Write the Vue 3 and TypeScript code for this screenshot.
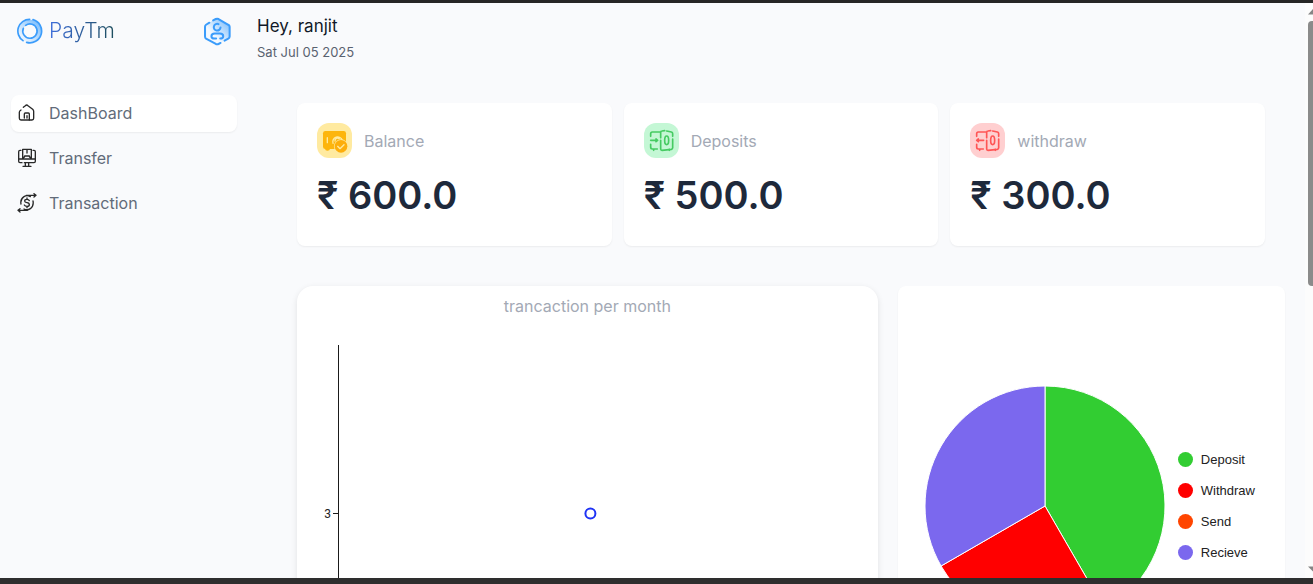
<script setup lang="ts">
import { computed } from 'vue'

interface NavItem {
  label: string
  icon: 'home' | 'transfer' | 'transaction'
  active?: boolean
}

interface Stat {
  label: string
  amount: string
  tone: 'amber' | 'green' | 'red'
}

interface Share {
  label: string
  value: number
  color: string
}

const navItems: NavItem[] = [
  { label: 'DashBoard', icon: 'home', active: true },
  { label: 'Transfer', icon: 'transfer' },
  { label: 'Transaction', icon: 'transaction' },
]

const stats: Stat[] = [
  { label: 'Balance', amount: '600.0', tone: 'amber' },
  { label: 'Deposits', amount: '500.0', tone: 'green' },
  { label: 'withdraw', amount: '300.0', tone: 'red' },
]

const shares: Share[] = [
  { label: 'Deposit', value: 500, color: '#32cd32' },
  { label: 'Withdraw', value: 300, color: '#ff0000' },
  { label: 'Send', value: 0, color: '#ff4500' },
  { label: 'Recieve', value: 400, color: '#7b68ee' },
]

const slices = computed(() => {
  const total = shares.reduce((sum, s) => sum + s.value, 0)
  const r = 120
  let angle = 0
  const point = (a: number) => `${r * Math.sin(a)} ${-r * Math.cos(a)}`
  return shares
    .filter((s) => s.value > 0)
    .map((s) => {
      const start = angle
      angle += (s.value / total) * Math.PI * 2
      const large = angle - start > Math.PI ? 1 : 0
      return {
        color: s.color,
        d: `M0 0L${point(start)}A${r} ${r} 0 ${large} 1 ${point(angle)}Z`,
      }
    })
})
</script>

<template>
  <div class="frame">
    <div class="app">
      <aside class="sidebar">
        <header class="brand-row">
          <a href="#" class="brand">
            <svg class="logo" viewBox="0 0 78 78" aria-hidden="true">
              <defs>
                <linearGradient id="ringFill" x1="0" y1="1" x2="1" y2="0">
                  <stop offset="0.2" stop-color="#e8f3fe" />
                  <stop offset="1" stop-color="#6db6fb" />
                </linearGradient>
              </defs>
              <circle cx="39" cy="39" r="34" fill="url(#ringFill)" />
              <circle cx="39" cy="39" r="21" fill="#f9fafc" />
              <g fill="none" stroke="#3b9cfb" stroke-width="5" stroke-linecap="round">
                <path d="M48 5A35 35 0 1 1 29 73M18 68A35 35 0 0 1 38 4" />
                <path d="M26 22A21.5 21.5 0 1 1 19 31" />
              </g>
            </svg>
            <span class="brand-name">PayTm</span>
          </a>
          <button class="avatar" type="button" aria-label="Profile">
            <svg viewBox="0 0 80 86" aria-hidden="true">
              <defs>
                <linearGradient id="hexFill" x1="0" y1="1" x2="1" y2="0">
                  <stop offset="0.35" stop-color="#f4f9ff" />
                  <stop offset="1" stop-color="#6db6fb" />
                </linearGradient>
              </defs>
              <path d="M39 4L76 24V62L39 82L3 62V24Z" fill="url(#hexFill)" />
              <g fill="none" stroke="#3b9cfb" stroke-width="6" stroke-linecap="round" stroke-linejoin="round">
                <path d="M16 17L6 23Q3 25 3 29V58Q3 62 6 64L35 80Q39 82 43 80L49 77M61 70L72 64Q76 62 76 58V29Q76 25 72 23L43 6Q39 4 35 6L27 10" />
                <path d="M43 21A10 10 0 1 0 49 31" />
                <path d="M36 64H31Q22 64 22 57Q22 49 32 49H47Q57 49 57 57Q57 64 48 64" />
              </g>
            </svg>
          </button>
        </header>

        <nav class="nav" aria-label="Main">
          <a v-for="item in navItems" :key="item.label" href="#" class="nav-item" :class="{ active: item.active }">
            <svg viewBox="0 0 60 60" class="nav-icon" aria-hidden="true">
              <g fill="none" stroke="#292929" stroke-width="4" stroke-linecap="round" stroke-linejoin="round">
                <template v-if="item.icon === 'home'">
                  <path d="M12 21Q7 24 7 28V46Q7 51 12 51H45Q50 51 50 46V25Q50 22 47 19L33 8Q29 4 25 8L19 13" />
                  <path d="M22 45V33Q22 30 25 30H34Q37 30 37 33V51M30 38V45" />
                </template>
                <template v-else-if="item.icon === 'transfer'">
                  <path d="M12 7H9Q5 7 5 11V40Q5 44 9 44H15M22 44H51Q55 44 55 40V11Q55 7 51 7H48" />
                  <path d="M5 33H55M17 31V4H43V31M30 6V15M17 29Q23 29 23 24H37Q37 29 43 29M25 46V54M35 46V54M18 55H42" />
                </template>
                <template v-else>
                  <path d="M40 11Q30 5 21 11Q9 19 12 33M21 48Q31 53 40 47Q51 39 48 24M28 7H56M51 2L57 7L51 12M32 52H4M9 47L3 52L9 57" />
                  <path d="M37 23Q35 19 30 19Q23 19 23 24Q23 28 30 29Q37 30 37 35Q37 40 30 40Q24 40 22 36M30 15V19M30 40V44" />
                </template>
              </g>
            </svg>
            <span>{{ item.label }}</span>
          </a>
        </nav>
      </aside>

      <main class="main">
        <header class="greeting">
          <h1>Hey, ranjit</h1>
          <p>Sat Jul 05 2025</p>
        </header>

        <section class="stats">
          <article v-for="stat in stats" :key="stat.label" class="stat">
            <div class="stat-head">
              <svg class="badge" :class="stat.tone" viewBox="0 0 105 105" aria-hidden="true">
                <template v-if="stat.tone === 'amber'">
                  <rect x="18" y="24" width="69" height="54" rx="7" fill="#fdb50d" />
                  <path d="M25 76H38V81Q31 86 25 81Z" fill="#fdb50d" />
                  <g fill="none" stroke="#ffeaa0" stroke-width="4" stroke-linecap="round">
                    <path d="M31 44V59" />
                    <path d="M48 61A14 14 0 1 1 76 52M54 54A8 8 0 0 1 67 47" />
                  </g>
                  <circle cx="72" cy="70" r="21" fill="#ffeaa0" />
                  <circle cx="72" cy="70" r="19" fill="#fdae0b" />
                  <path d="M62 70L69 77L81 65" fill="none" stroke="#ffeaa0" stroke-width="4" stroke-linecap="round" stroke-linejoin="round" />
                </template>
                <g v-else fill="none" stroke="currentColor" stroke-width="5" stroke-linecap="round" stroke-linejoin="round">
                  <path d="M20 40V32Q20 27 25 27H47M20 64V73Q20 78 25 78H40M29 78V82M76 82V79" />
                  <path d="M50 44V28Q50 24 54 24L62 23M68 24L82 27Q86 28 86 32V40M86 48V74Q86 78 82 79L54 82Q50 82 50 78V52" />
                  <ellipse cx="68" cy="52" rx="6" ry="13" />
                  <path :d="stat.tone === 'green' ? 'M20 52H41M36 48L41 52L36 56' : 'M41 52H20M25 48L20 52L25 56'" />
                </g>
              </svg>
              <h2>{{ stat.label }}</h2>
            </div>
            <p class="amount">₹ {{ stat.amount }}</p>
          </article>
        </section>

        <section class="charts">
          <figure class="card line-card">
            <figcaption>trancaction per month</figcaption>
            <svg class="line-chart" role="img" aria-label="Transactions per month">
              <path d="M35.5 0V400M30 168.5H35.5" fill="none" stroke="#1a1a1a" />
              <text x="28" y="173" text-anchor="end">3</text>
              <circle cx="50%" cy="168.5" r="5" fill="#fff" stroke="#1f33f5" stroke-width="2" />
            </svg>
          </figure>

          <figure class="card pie-card">
            <svg class="pie" viewBox="-121 -121 242 242" role="img" aria-label="Share of transactions">
              <path v-for="slice in slices" :key="slice.color" :d="slice.d" :fill="slice.color" stroke="#fff" stroke-linejoin="round" />
            </svg>
            <ul class="legend">
              <li v-for="share in shares" :key="share.label">
                <svg viewBox="0 0 15 15" aria-hidden="true"><circle cx="7.5" cy="7.5" r="7.5" :fill="share.color" /></svg>
                <span>{{ share.label }}</span>
              </li>
            </ul>
          </figure>
        </section>
      </main>

      <div class="scrollbar" aria-hidden="true">
        <svg viewBox="0 0 5 6"><path d="M0 5.5L5 0V5.5Z" fill="#858585" /></svg>
        <div class="thumb"></div>
        <svg viewBox="0 0 5 6"><path d="M0 0.5L5 5.5V0.5Z" fill="#858585" /></svg>
      </div>
    </div>
  </div>
</template>

<style>
body {
  margin: 0;
  background: #f9fafc;
}
</style>

<style scoped>
.frame {
  box-sizing: border-box;
  height: 100vh;
  border-top: 3px solid #262626;
  border-bottom: 6px solid #2e2e2e;
  overflow: hidden;
  font-family: Inter, "Noto Sans", "Liberation Sans", sans-serif;
  font-size: 16px;
  font-weight: 400;
  line-height: 24px;
  color: #111827;
}

.app {
  display: flex;
  height: 100%;
}

h1,
h2,
p,
ul,
figure {
  margin: 0;
  padding: 0;
  font-weight: inherit;
}

a {
  color: inherit;
  text-decoration: none;
}

.sidebar {
  flex: 0 0 226px;
  padding: 12px 20px 0 11px;
}

.brand-row {
  display: flex;
  align-items: center;
  justify-content: space-between;
  height: 32px;
  padding: 0 6px;
}

.brand {
  display: flex;
  align-items: center;
  gap: 6px;
}

.logo {
  width: 26px;
  height: 26px;
}

.brand-name {
  font-size: 21px;
  font-weight: 300;
  line-height: 28px;
  background: linear-gradient(90deg, #3f6fdc, #1d4d5c);
  background-clip: text;
  -webkit-background-clip: text;
  color: transparent;
}

.avatar {
  display: flex;
  padding: 0;
  border: 0;
  background: none;
}

.avatar svg {
  width: 27px;
  height: 29px;
}

.nav {
  display: flex;
  flex-direction: column;
  gap: 8px;
  margin-top: 48px;
}

.nav-item {
  display: flex;
  align-items: center;
  box-sizing: border-box;
  gap: 12px;
  height: 37px;
  padding: 0 6px 2px;
  border-radius: 8px;
  color: #626b79;
}

.nav-item.active {
  background: #fff;
  box-shadow: 0 1px 2px rgba(0, 0, 0, 0.06);
}

.nav-icon {
  width: 20px;
  height: 20px;
}

.main {
  flex: 1;
  min-width: 0;
  padding-right: 20px;
}

.greeting {
  padding-top: 9px;
}

.greeting h1 {
  font-size: 17px;
  line-height: 28px;
}

.greeting p {
  font-size: 13px;
  line-height: 24px;
  color: #596270;
}

.stats {
  display: grid;
  grid-template-columns: repeat(3, 1fr);
  gap: 12px;
  margin: 39px 20px 0 40px;
}

.stat {
  padding: 20px 20px 27px;
  border-radius: 8px;
  background: #fff;
  box-shadow: 0 1px 2px rgba(0, 0, 0, 0.06);
}

.stat-head {
  display: flex;
  align-items: center;
  gap: 12px;
  color: #a3a9b5;
}

.stat-head h2 {
  font-size: 16px;
}

.badge {
  width: 35px;
  height: 35px;
  border-radius: 12px;
}

.amber {
  background: #ffeaa0;
}

.green {
  background: #c4f7d5;
  color: #45cb62;
}

.red {
  background: #ffcfd0;
  color: #ff5555;
}

.amount {
  margin-top: 13px;
  font-size: 38px;
  font-weight: 600;
  line-height: 48px;
  color: #1e293b;
}

.charts {
  display: grid;
  grid-template-columns: 3fr 2fr;
  gap: 20px;
  margin: 40px 0 0 40px;
}

.card {
  min-height: 480px;
  background: #fff;
}

.line-card {
  border-radius: 16px;
  box-shadow: 0 2px 6px rgba(0, 0, 0, 0.1);
}

.line-card figcaption {
  padding: 8px 0 27px;
  text-align: center;
  color: #a3a9b5;
}

.line-chart {
  box-sizing: border-box;
  display: block;
  width: calc(100% - 6px);
  height: 400px;
  margin-left: 6px;
}

.line-chart text {
  font: 12px Roboto, "Liberation Sans", sans-serif;
  fill: #222;
}

.pie-card {
  box-sizing: border-box;
  display: flex;
  align-items: flex-start;
  gap: 12px;
  padding: 99px 26px 0;
  border-radius: 8px;
  box-shadow: 0 1px 2px rgba(0, 0, 0, 0.06);
}

.pie {
  flex: 0 0 242px;
  height: 242px;
}

.legend {
  display: flex;
  flex-direction: column;
  gap: 16px;
  margin-top: 67px;
  list-style: none;
  font: 13px "Liberation Sans", Arial, sans-serif;
  line-height: 15px;
  color: #222;
}

.legend li {
  display: flex;
  align-items: center;
  gap: 8px;
}

.legend svg {
  width: 15px;
  height: 15px;
}

.scrollbar {
  display: flex;
  flex: 0 0 8px;
  flex-direction: column;
  align-items: flex-end;
  box-sizing: border-box;
  padding: 6px 0;
  background: #fcfcfc;
}

.scrollbar svg {
  width: 5px;
  height: 6px;
}

.thumb {
  width: 5px;
  height: 47%;
  margin: 6px 0 auto;
  border-radius: 4px 0 0 4px;
  background: #8b8b8b;
}
</style>
